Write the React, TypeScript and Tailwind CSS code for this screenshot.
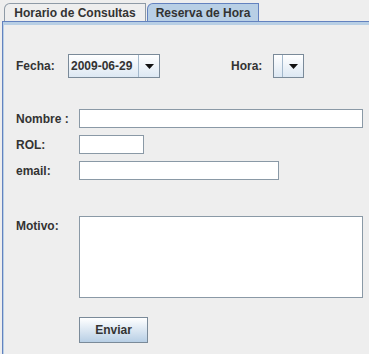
import * as React from "react";

function Combo({ width, value }: { width: string; value?: string }) {
  return (
    <div className={`flex h-[24px] ${width} border border-[#7a8a99] bg-gradient-to-b from-white to-[#dde8f3]`}>
      <div className="flex flex-1 items-center border-r border-[#a3b8cc] px-[2px] text-[12px] font-bold text-[#333]">
        {value}
      </div>
      <div className="flex w-[20px] items-center justify-center">
        <svg width="9" height="5" viewBox="0 0 9 5">
          <path d="M0 0h9L4.5 5z" fill="#111" />
        </svg>
      </div>
    </div>
  );
}

function Field({ width }: { width: string }) {
  return <div className={`h-[19px] ${width} border border-[#8a99a6] bg-white`} />;
}

function Row({ label, children }: { label: string; children: React.ReactNode }) {
  return (
    <div className="flex h-[19px] items-center">
      <div className="w-[63px] text-[12px] font-bold text-[#333]">{label}</div>
      {children}
    </div>
  );
}

export default function App() {
  return (
    <div className="h-[354px] w-[369px] overflow-hidden bg-[#eeeeee] font-['Liberation_Sans',Arial,sans-serif]">
      <div className="flex h-[21px] items-end pl-[4px] pt-[3px]">
        <div className="flex h-[18px] w-[142px] items-center justify-center rounded-tl-[6px] border border-b-0 border-[#8e9aa6] bg-[#eeeeee] text-[12px] font-bold text-[#333]">
          Horario de Consultas
        </div>
        <div className="ml-[1px] flex h-[18px] w-[112px] items-center justify-center rounded-tl-[6px] border border-b-0 border-[#6382bf] bg-[#b8cfe5] text-[12px] font-bold text-[#333]">
          Reserva de Hora
        </div>
      </div>
      <div className="ml-[2px] h-[333px] border-l border-t border-[#6382bf]">
        <div className="h-full border-l-[1px] border-t-[3px] border-[#b8cfe5]">
          <div className="pl-[12px] pt-[29px]">
            <div className="flex h-[24px] items-center">
              <div className="w-[52px] text-[12px] font-bold text-[#333]">Fecha:</div>
              <Combo width="w-[92px]" value="2009-06-29" />
              <div className="ml-[71px] w-[42px] text-[12px] font-bold text-[#333]">Hora:</div>
              <Combo width="w-[31px]" />
            </div>

            <div className="mt-[31px] flex flex-col gap-[7px]">
              <Row label="Nombre :">
                <Field width="w-[284px]" />
              </Row>
              <Row label="ROL:">
                <Field width="w-[65px]" />
              </Row>
              <Row label="email:">
                <Field width="w-[200px]" />
              </Row>
            </div>

            <div className="mt-[36px] flex items-start">
              <div className="w-[63px] pt-[1px] text-[12px] font-bold text-[#333]">Motivo:</div>
              <div className="h-[82px] w-[284px] border border-[#8a99a6] bg-white" />
            </div>

            <div className="mt-[19px] pl-[63px]">
              <button className="h-[26px] w-[69px] border border-[#7a8a99] bg-gradient-to-b from-white to-[#b8cfe5] text-[12px] font-bold text-[#333]">
                Enviar
              </button>
            </div>
          </div>
        </div>
      </div>
    </div>
  );
}
